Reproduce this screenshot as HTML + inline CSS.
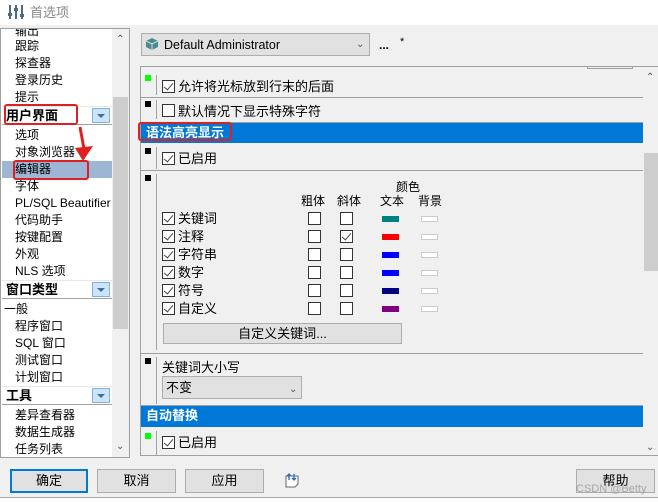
<!DOCTYPE html>
<html><head><meta charset="utf-8"><style>
*{box-sizing:border-box;margin:0;padding:0}
body{width:658px;height:503px;overflow:hidden;background:#f0f0f0;font-family:"Liberation Sans","Noto Sans CJK SC",sans-serif;font-size:12px;color:#000;position:relative}
.a{position:absolute;white-space:nowrap;line-height:16px}
.li{position:absolute;left:14px;font-size:12px;line-height:16px}
.hd{position:absolute;left:1px;width:110px;height:19px;background:#fff;border-top:1px solid #e8e8e8;border-bottom:1px solid #a0a0a0;font-weight:bold;font-size:13px;line-height:18px;padding-left:4px}
.dd{position:absolute;right:2px;top:1px;width:18px;height:15px;background:#cce4f7;border:1px solid #7fb2e0}
.dd:after{content:"";position:absolute;left:4px;top:5px;border-left:4px solid transparent;border-right:4px solid transparent;border-top:4px solid #3c6ea8}
.cb{position:absolute;width:13px;height:13px;border:1px solid #333;background:#fff}
.ck:after{content:"";position:absolute;left:3px;top:0px;width:4px;height:8px;border:solid #444;border-width:0 1.5px 1.5px 0;transform:rotate(40deg)}
.sq{position:absolute;left:145px;width:6px;height:6px;background:#000}
.sep{position:absolute;left:141px;width:502px;height:1px;background:#a0a0a0}
.vl{position:absolute;left:156px;width:1px;background:#a0a0a0}
.btn{position:absolute;height:24px;background:#e1e1e1;border:1px solid #adadad;text-align:center;line-height:22px;font-size:13px}
.sw{position:absolute;width:17px;height:6px}
.bg{position:absolute;left:421px;width:17px;height:6px;background:#fff;border:1px solid #ccc}
.blue{position:absolute;left:141px;width:502px;height:20px;background:#0078d7;color:#fff;font-weight:bold;font-size:13px;line-height:20px;padding-left:5px}
.red{position:absolute;border:2px solid #e02020;border-radius:3px}
</style></head><body>
<div class="a" style="left:0;top:0;width:658px;height:25px;background:#fff"></div>
<svg class="a" style="left:8px;top:4px" width="16" height="16"><g fill="#4a6a8a"><rect x="1" y="1" width="2" height="14"/><rect x="7" y="1" width="2" height="14"/><rect x="13" y="1" width="2" height="14"/><rect x="0" y="9" width="4" height="3"/><rect x="6" y="4" width="4" height="3"/><rect x="12" y="10" width="4" height="3"/></g></svg>
<div class="a" style="left:30px;top:5px;color:#888;font-size:13px">首选项</div>

<!-- left panel -->
<div class="a" style="left:0;top:28px;width:130px;height:430px;background:#fff;border:1px solid #a0a0a0;overflow:hidden">
<div class="li" style="top:-6px">输出</div>
<div class="li" style="top:9px">跟踪</div>
<div class="li" style="top:26px">探查器</div>
<div class="li" style="top:43px">登录历史</div>
<div class="li" style="top:60px">提示</div>
<div class="hd" style="top:77px">用户界面<div class="dd"></div></div>
<div class="li" style="top:98px">选项</div>
<div class="li" style="top:115px">对象浏览器</div>
<div class="a" style="left:1px;top:132px;width:110px;height:17px;background:#9db6d3"></div>
<div class="li" style="top:132px">编辑器</div>
<div class="li" style="top:149px">字体</div>
<div class="li" style="top:166px">PL/SQL Beautifier</div>
<div class="li" style="top:183px">代码助手</div>
<div class="li" style="top:200px">按键配置</div>
<div class="li" style="top:217px">外观</div>
<div class="li" style="top:234px">NLS 选项</div>
<div class="hd" style="top:251px">窗口类型<div class="dd"></div></div>
<div class="li" style="top:272px;left:3px">一般</div>
<div class="li" style="top:289px">程序窗口</div>
<div class="li" style="top:306px">SQL 窗口</div>
<div class="li" style="top:323px">测试窗口</div>
<div class="li" style="top:340px">计划窗口</div>
<div class="hd" style="top:357px">工具<div class="dd"></div></div>
<div class="li" style="top:378px">差异查看器</div>
<div class="li" style="top:395px">数据生成器</div>
<div class="li" style="top:412px">任务列表</div>
<div class="a" style="left:111px;top:0;width:17px;height:430px;background:#f0f0f0"></div>
<div class="a" style="left:112px;top:68px;width:15px;height:232px;background:#cdcdcd"></div>
<div class="a" style="left:115px;top:3px;color:#555;font-size:10px">&#8963;</div>
<div class="a" style="left:115px;top:410px;color:#555;font-size:10px">&#8964;</div>
</div>

<!-- combo -->
<div class="a" style="left:141px;top:33px;width:229px;height:23px;background:#e1e1e1;border:1px solid #adadad"></div>
<svg class="a" style="left:145px;top:37px" width="14" height="14"><path d="M7 1L13 4V10L7 13L1 10V4Z" fill="#4a8a8a"/><path d="M1 4L7 7L13 4M7 7V13" stroke="#cde" fill="none"/></svg>
<div class="a" style="left:164px;top:37px;font-size:12.5px">Default Administrator</div>
<div class="a" style="left:356px;top:37px;font-size:10px;color:#555">&#8964;</div>
<div class="a" style="left:379px;top:37px;font-weight:bold">...</div>
<div class="a" style="left:400px;top:34px;font-size:11px">*</div>

<!-- right panel -->
<div class="a" style="left:140px;top:66px;width:518px;height:390px;border:1px solid #a0a0a0;background:#f0f0f0"></div>
<div class="a" style="left:643px;top:67px;width:15px;height:388px;background:#f0f0f0"></div>
<div class="a" style="left:644px;top:153px;width:14px;height:118px;background:#cdcdcd"></div>
<div class="a" style="left:646px;top:70px;font-size:10px;color:#555">&#8963;</div>
<div class="a" style="left:646px;top:440px;font-size:10px;color:#555">&#8964;</div>
<div class="a" style="left:587px;top:66px;width:46px;height:3px;border:1px solid #a0a0a0;border-top:none"></div>

<div class="sq" style="top:75px;background:#0f0"></div><div class="vl" style="top:75px;height:20px"></div>
<div class="cb ck" style="left:162px;top:80px"></div><div class="a" style="left:178px;top:79px;font-size:13px">允许将光标放到行末的后面</div>
<div class="sep" style="top:97px"></div>
<div class="sq" style="top:101px"></div><div class="vl" style="top:100px;height:19px"></div>
<div class="cb" style="left:162px;top:104px"></div><div class="a" style="left:178px;top:104px;font-size:13px">默认情况下显示特殊字符</div>
<div class="sep" style="top:122px"></div>
<div class="blue" style="top:123px">语法高亮显示</div>
<div class="sq" style="top:148px"></div><div class="vl" style="top:147px;height:22px"></div>
<div class="cb ck" style="left:162px;top:152px"></div><div class="a" style="left:178px;top:151px;font-size:13px">已启用</div>
<div class="sep" style="top:170px"></div>
<div class="sq" style="top:175px"></div><div class="vl" style="top:174px;height:176px"></div>
<div class="a" style="left:396px;top:179px;font-size:12px">颜色</div>
<div class="a" style="left:301px;top:193px">粗体</div>
<div class="a" style="left:337px;top:193px">斜体</div>
<div class="a" style="left:380px;top:193px">文本</div>
<div class="a" style="left:418px;top:193px">背景</div>

<div class="cb ck" style="left:162px;top:212px"></div><div class="a" style="left:178px;top:211px;font-size:13px">关键词</div>
<div class="cb" style="left:308px;top:212px"></div><div class="cb" style="left:340px;top:212px"></div>
<div class="sw" style="left:382px;top:216px;background:#008080"></div><div class="bg" style="top:216px"></div>

<div class="cb ck" style="left:162px;top:230px"></div><div class="a" style="left:178px;top:229px;font-size:13px">注释</div>
<div class="cb" style="left:308px;top:230px"></div><div class="cb ck" style="left:340px;top:230px"></div>
<div class="sw" style="left:382px;top:234px;background:#f00"></div><div class="bg" style="top:234px"></div>

<div class="cb ck" style="left:162px;top:248px"></div><div class="a" style="left:178px;top:247px;font-size:13px">字符串</div>
<div class="cb" style="left:308px;top:248px"></div><div class="cb" style="left:340px;top:248px"></div>
<div class="sw" style="left:382px;top:252px;background:#00f"></div><div class="bg" style="top:252px"></div>

<div class="cb ck" style="left:162px;top:266px"></div><div class="a" style="left:178px;top:265px;font-size:13px">数字</div>
<div class="cb" style="left:308px;top:266px"></div><div class="cb" style="left:340px;top:266px"></div>
<div class="sw" style="left:382px;top:270px;background:#00f"></div><div class="bg" style="top:270px"></div>

<div class="cb ck" style="left:162px;top:284px"></div><div class="a" style="left:178px;top:283px;font-size:13px">符号</div>
<div class="cb" style="left:308px;top:284px"></div><div class="cb" style="left:340px;top:284px"></div>
<div class="sw" style="left:382px;top:288px;background:#000080"></div><div class="bg" style="top:288px"></div>

<div class="cb ck" style="left:162px;top:302px"></div><div class="a" style="left:178px;top:301px;font-size:13px">自定义</div>
<div class="cb" style="left:308px;top:302px"></div><div class="cb" style="left:340px;top:302px"></div>
<div class="sw" style="left:382px;top:306px;background:#800080"></div><div class="bg" style="top:306px"></div>

<div class="btn" style="left:163px;top:323px;width:239px;height:21px;line-height:19px">自定义关键词...</div>
<div class="sep" style="top:353px"></div>
<div class="sq" style="top:358px"></div><div class="vl" style="top:357px;height:47px"></div>
<div class="a" style="left:162px;top:360px;font-size:13px">关键词大小写</div>
<div class="a" style="left:162px;top:376px;width:140px;height:23px;background:#e1e1e1;border:1px solid #adadad"></div>
<div class="a" style="left:166px;top:380px;font-size:13px">不变</div>
<div class="a" style="left:289px;top:382px;font-size:10px;color:#555">&#8964;</div>
<div class="sep" style="top:405px"></div>
<div class="blue" style="top:406px;height:21px">自动替换</div>
<div class="sq" style="top:433px;background:#0f0"></div><div class="vl" style="top:431px;height:24px"></div>
<div class="cb ck" style="left:162px;top:436px"></div><div class="a" style="left:178px;top:435px;font-size:13px">已启用</div>

<!-- bottom -->
<div class="btn" style="left:10px;top:469px;width:78px;border:2px solid #0078d7;line-height:20px">确定</div>
<div class="btn" style="left:97px;top:469px;width:79px">取消</div>
<div class="btn" style="left:185px;top:469px;width:79px">应用</div>
<svg class="a" style="left:284px;top:472px" width="16" height="16"><path d="M2 4H14V12L11 15H2Z" fill="#fff" stroke="#666"/><path d="M5 8V2M3 4L5 2L7 4M10 2V8M8 6L10 8L12 6" stroke="#2a6ac0" fill="none" stroke-width="1.3"/></svg>
<div class="btn" style="left:576px;top:469px;width:79px">帮助</div>
<div class="a" style="left:576px;top:481px;color:#999;font-size:11px;opacity:.8">CSDN @Betty</div>
<div class="a" style="left:0;top:497px;width:658px;height:6px;background:#fff;border-top:1px solid #aaa"></div>

<!-- annotations -->
<div class="red" style="left:4px;top:104px;width:74px;height:21px"></div>
<div class="red" style="left:13px;top:160px;width:76px;height:20px"></div>
<div class="red" style="left:138px;top:122px;width:94px;height:19px"></div>
<svg class="a" style="left:70px;top:125px" width="30" height="40"><path d="M10 2L14 24" stroke="#e02020" stroke-width="3"/><path d="M5 23L23 21L13 36Z" fill="#e02020"/></svg>
</body></html>
